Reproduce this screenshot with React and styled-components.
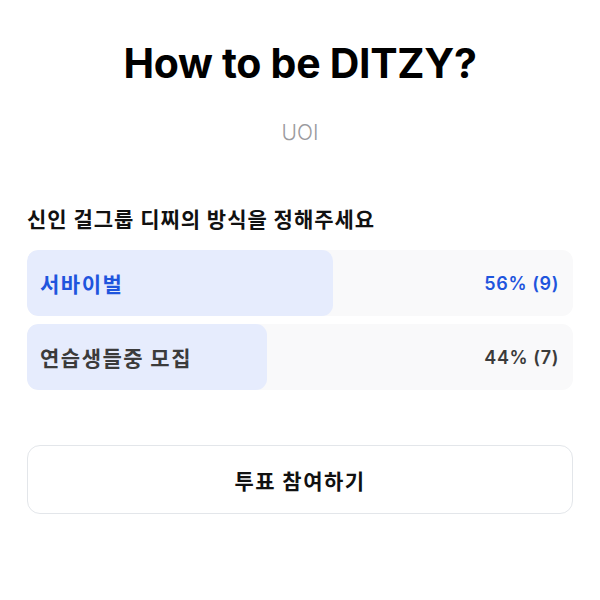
import React from "react";
import styled, { createGlobalStyle } from "styled-components";

const Global = createGlobalStyle`
  html, body { margin: 0; padding: 0; background: #ffffff; }
  body { font-family: Inter, "Noto Sans CJK KR", sans-serif; }
`;

const Page = styled.div`
  width: 600px;
  box-sizing: border-box;
  padding: 39px 27px 0;
  display: flex;
  flex-direction: column;
`;

const Title = styled.h1`
  margin: 0;
  text-align: center;
  font-family: Inter, "Noto Sans CJK KR", sans-serif;
  font-weight: 700;
  font-size: 41px;
  line-height: 48px;
  letter-spacing: -0.3px;
  color: #000;
`;

const Author = styled.div`
  margin-top: 33px;
  text-align: center;
  font-family: Inter, "Noto Sans CJK KR", sans-serif;
  font-weight: 300;
  font-size: 21px;
  line-height: 26px;
  color: #9a9a9e;
`;

const Question = styled.h2`
  margin: 58px 0 0;
  font-family: "Noto Sans CJK KR", sans-serif;
  font-weight: 700;
  font-size: 21px;
  line-height: 28px;
  letter-spacing: 1px;
  color: #111;
`;

const Options = styled.div`
  margin-top: 18px;
  display: flex;
  flex-direction: column;
  gap: 8px;
`;

const Option = styled.div`
  position: relative;
  height: 66px;
  border-radius: 11px;
  background: #f9f9fa;
  overflow: hidden;
  display: flex;
  align-items: center;
  justify-content: space-between;
  padding: 0 14px 0 13px;
`;

const Fill = styled.div`
  position: absolute;
  left: 0;
  top: 0;
  bottom: 0;
  border-radius: 11px;
  background: #e6ecfd;
`;

const Label = styled.span`
  position: relative;
  font-family: "Noto Sans CJK KR", sans-serif;
  font-weight: 700;
  font-size: 21px;
  letter-spacing: 1.5px;
  color: ${(p) => (p.$active ? "#1f55dd" : "#3b3b3b")};
`;

const Percent = styled.span`
  position: relative;
  font-family: Inter, sans-serif;
  font-weight: 600;
  font-size: 18px;
  letter-spacing: 0.6px;
  color: ${(p) => (p.$active ? "#1f55dd" : "#3b3b3b")};
`;

const Button = styled.button`
  margin-top: 55px;
  height: 69px;
  border: 1.5px solid #e3e6ea;
  border-radius: 13px;
  background: #fff;
  font-family: "Noto Sans CJK KR", sans-serif;
  font-weight: 700;
  font-size: 21px;
  letter-spacing: 1.5px;
  color: #111;
  cursor: pointer;
`;

const data = [
  { label: "서바이벌", pct: 56, count: 9, active: true },
  { label: "연습생들중 모집", pct: 44, count: 7, active: false },
];

export default function App() {
  return (
    <>
      <Global />
      <Page>
        <Title>How to be DITZY?</Title>
        <Author>UOI</Author>
        <Question>신인 걸그룹 디찌의 방식을 정해주세요</Question>
        <Options>
          {data.map((d) => (
            <Option key={d.label}>
              <Fill style={{ width: `${d.pct}%` }} />
              <Label $active={d.active}>{d.label}</Label>
              <Percent $active={d.active}>
                {d.pct}% ({d.count})
              </Percent>
            </Option>
          ))}
        </Options>
        <Button>투표 참여하기</Button>
      </Page>
    </>
  );
}
